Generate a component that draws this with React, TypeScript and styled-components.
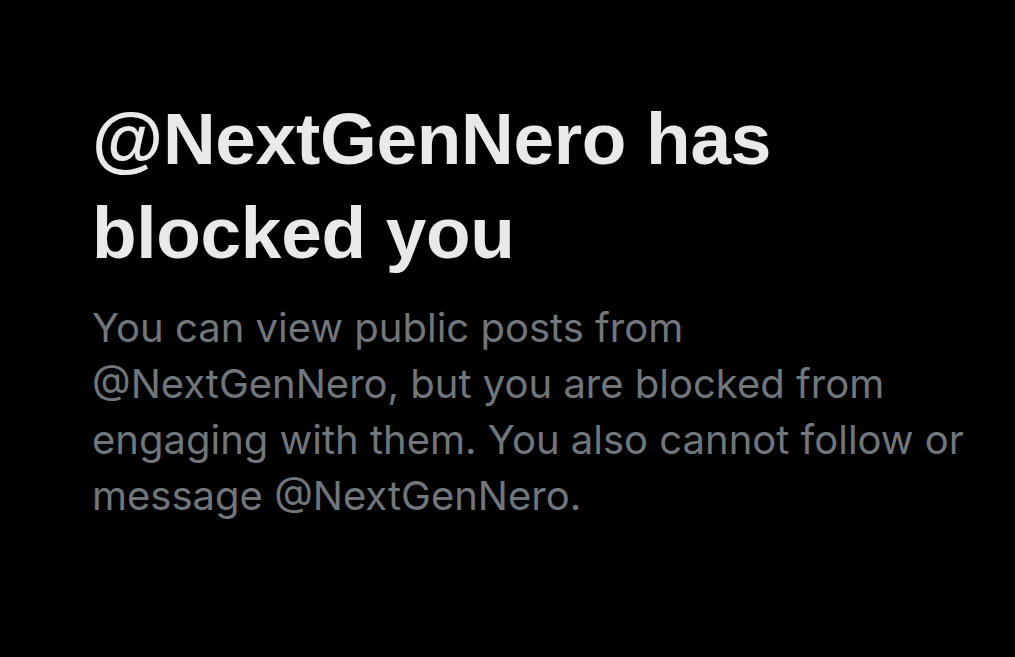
import styled, { createGlobalStyle } from "styled-components";

const Global = createGlobalStyle`
  html, body {
    margin: 0;
    padding: 0;
    background: #000;
  }
`;

const Page = styled.main`
  min-height: 657px;
  background: #000;
  padding: 92px 0 0 92px;
  box-sizing: border-box;
`;

const Notice = styled.section`
  width: 890px;
  display: flex;
  flex-direction: column;
  gap: 20px;
`;

const Title = styled.h1`
  margin: 0;
  font-family: "Liberation Sans", Arial, sans-serif;
  font-weight: 700;
  font-size: 73px;
  line-height: 94px;
  letter-spacing: -0.3px;
  color: #e7e9ea;
`;

const Body = styled.p`
  margin: 0;
  font-family: Inter, "Noto Sans", sans-serif;
  font-weight: 400;
  font-size: 40px;
  line-height: 56px;
  color: #71767b;
`;

const App = () => {
    const handle = "NextGenNero";

    return (
        <Page>
            <Global />
            <Notice>
                <Title>@{handle} has blocked you</Title>
                <Body>
                    You can view public posts from @{handle}, but you are blocked from engaging with them. You also cannot
                    follow or message @{handle}.
                </Body>
            </Notice>
        </Page>
    )
}

export default App
